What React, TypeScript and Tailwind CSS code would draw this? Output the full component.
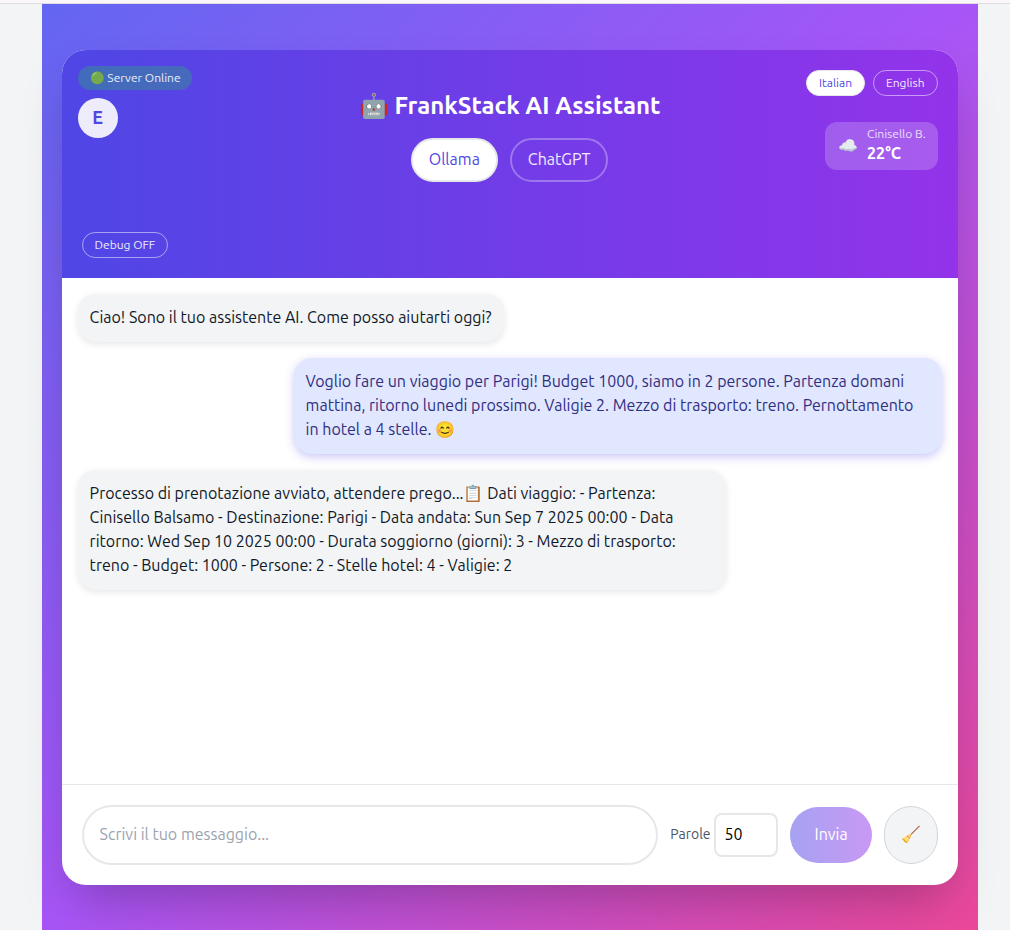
type Message = { from: "bot" | "user"; text: string };

const messages: Message[] = [
  { from: "bot", text: "Ciao! Sono il tuo assistente AI. Come posso aiutarti oggi?" },
  {
    from: "user",
    text: "Voglio fare un viaggio per Parigi! Budget 1000, siamo in 2 persone. Partenza domani mattina, ritorno lunedi prossimo. Valigie 2. Mezzo di trasporto: treno. Pernottamento in hotel a 4 stelle. 😊",
  },
  {
    from: "bot",
    text: "Processo di prenotazione avviato, attendere prego...📋 Dati viaggio: - Partenza: Cinisello Balsamo - Destinazione: Parigi - Data andata: Sun Sep 7 2025 00:00 - Data ritorno: Wed Sep 10 2025 00:00 - Durata soggiorno (giorni): 3 - Mezzo di trasporto: treno - Budget: 1000 - Persone: 2 - Stelle hotel: 4 - Valigie: 2",
  },
];

function Header() {
  return (
    <header className="grid h-[228px] shrink-0 grid-cols-[1fr_auto_1fr] bg-[linear-gradient(90deg,#4f46e5,#9333ea)] text-white">
      <div className="flex flex-col items-start pt-4 pb-5 pl-4">
        <div className="flex h-6 items-center rounded-full bg-[#22c55e]/30 pr-[11px] pl-3 text-xs whitespace-nowrap text-white/90">
          🟢 Server Online
        </div>
        <div className="mt-2 flex size-10 items-center justify-center rounded-full bg-white/90 pb-0.5 text-lg font-bold text-[#4f46e5]">
          E
        </div>
        <button className="mt-auto ml-1 h-[26px] rounded-[13px] border border-white/50 px-3 text-xs text-white/90">
          Debug OFF
        </button>
      </div>

      <div className="flex flex-col items-center pt-10">
        <h1 className="text-2xl leading-8 font-bold whitespace-nowrap">🤖 FrankStack AI Assistant</h1>
        <div className="mt-4 flex gap-3">
          <button className="h-11 rounded-[22px] border-2 border-[#e5e7eb] bg-white px-4 pb-0.5 text-[#4f46e5]">Ollama</button>
          <button className="h-11 rounded-[22px] border-2 border-white/30 px-4 pb-0.5 text-white/90">ChatGPT</button>
        </div>
      </div>

      <div className="flex flex-col items-end pt-5 pr-5">
        <div className="flex gap-2">
          <button className="h-[26px] rounded-[13px] border border-[#e5e7eb] bg-white px-3 text-xs text-[#4f46e5]">
            Italian
          </button>
          <button className="h-[26px] rounded-[13px] border border-white/50 px-3 text-xs text-white/90">English</button>
        </div>
        <div className="mt-[26px] flex h-12 items-center gap-[9px] rounded-xl bg-white/20 pr-3 pb-0.5 pl-[13px]">
          <span className="text-base">☁️</span>
          <div className="flex flex-col">
            <span className="text-xs leading-4 text-white/80">Cinisello B.</span>
            <span className="text-base leading-[22px] font-bold">22°C</span>
          </div>
        </div>
      </div>
    </header>
  );
}

function Bubble({ from, text }: Message) {
  return (
    <div
      className={
        from === "user"
          ? "max-w-[75%] self-end rounded-[18px] bg-[#e0e7ff] px-3 pt-[11px] pb-[13px] text-[#312e81] shadow-[0_3px_10px_rgba(79,70,229,0.3)]"
          : "max-w-[75%] self-start rounded-[18px] bg-[#f3f4f6] px-3 pt-[11px] pb-[13px] text-[#111827] shadow-[0_2px_7px_rgba(0,0,0,0.1)]"
      }
    >
      {text}
    </div>
  );
}

function Composer() {
  return (
    <form className="flex h-[101px] shrink-0 items-center gap-3 border-t border-[#e5e7eb] px-5">
      <input
        className="h-[60px] min-w-0 flex-1 rounded-[30px] border-2 border-[#e5e7eb] px-4 pb-0.5 placeholder:text-[#9ca3af]"
        placeholder="Scrivi il tuo messaggio..."
      />
      <label className="flex items-center gap-[3px] text-sm text-[#4b5563]">
        <span className="pb-0.5">Parole</span>
        <input
          className="h-11 w-16 rounded-lg border-2 border-[#e5e7eb] px-[9px] pb-0.5 text-base text-black"
          defaultValue="50"
        />
      </label>
      <button
        type="button"
        className="h-14 w-[82px] rounded-[28px] bg-[linear-gradient(90deg,#4f46e5,#9333ea)] pb-0.5 pl-px text-white opacity-50"
      >
        Invia
      </button>
      <button type="button" className="h-[58px] w-[54px] rounded-[27px] border border-[#d1d5db] bg-[#f3f4f6] pb-0.5">
        🧹
      </button>
    </form>
  );
}

export default function App() {
  return (
    <div className="flex h-[930px] w-full flex-col overflow-hidden bg-[#f3f4f6] font-['Ubuntu','Noto_Sans',sans-serif] text-base">
      <div className="h-1 shrink-0 border-b border-[#e0dee0] bg-[#faf6f9]" />
      <div className="ml-[41.6px] flex w-[936px] flex-1 flex-col bg-[linear-gradient(135deg,#6366f1,#a855f7_50%,#ec4899)] px-5 pt-[46px] pb-[45px]">
        <main className="flex flex-1 flex-col overflow-hidden rounded-3xl bg-white shadow-2xl">
          <Header />
          <section className="flex flex-1 flex-col gap-4 p-4">
            {messages.map((m) => (
              <Bubble key={m.text} {...m} />
            ))}
          </section>
          <Composer />
        </main>
      </div>
    </div>
  );
}
